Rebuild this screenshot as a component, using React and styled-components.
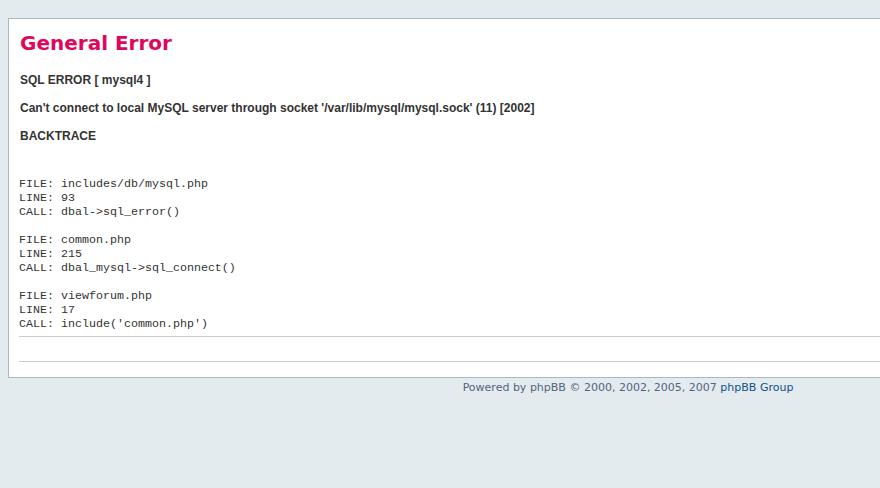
import React from "react";
import styled, { createGlobalStyle } from "styled-components";

const Global = createGlobalStyle`
  html, body { margin: 0; padding: 0; overflow: hidden; }
  body {
    background: #e4ebee;
    font-family: "DejaVu Sans", Verdana, sans-serif;
    font-size: 11px;
    color: #536482;
  }
`;

const Wrap = styled.div`
  width: 1240px;
  padding: 18px 0 0 8px;
`;

const Panel = styled.div`
  background: #ffffff;
  border: 1px solid #a9b8c2;
`;

const Content = styled.div`
  padding: 10px 10px 15px 10px;
`;

const Title = styled.h1`
  margin: 0;
  padding-left: 1px;
  font-family: "DejaVu Sans", Verdana, sans-serif;
  font-weight: bold;
  font-size: 20px;
  line-height: 28px;
  color: #df075c;
`;

const Message = styled.div`
  margin-top: ${(p) => p.$top}px;
  padding-bottom: 5px;
  border-bottom: 1px solid #cccccc;
  color: #333333;
  font-family: "Liberation Sans", Arial, sans-serif;
  font-weight: bold;
  font-size: 12px;
  line-height: 14px;
`;

const Para = styled.p`
  margin: 0 0 14px 0;
  padding-left: 1px;
  &:last-child { margin-bottom: 0; }
`;

const Trace = styled.div`
  margin-top: 34px;
  font-family: "Liberation Mono", "Courier New", monospace;
  font-weight: normal;
  font-size: 11.67px;
  line-height: 14px;
  color: #333333;
`;

const Frame = styled.div`
  margin-bottom: 14px;
  &:last-child { margin-bottom: 0; }
`;

const Footer = styled.div`
  margin-top: 4px;
  text-align: center;
  line-height: 12px;
  font-size: 11px;
  color: #536482;
`;

const Link = styled.a`
  color: #105289;
  text-decoration: none;
`;

const frames = [
  ["includes/db/mysql.php", "93", "dbal->sql_error()"],
  ["common.php", "215", "dbal_mysql->sql_connect()"],
  ["viewforum.php", "17", "include('common.php')"],
];

export default function App() {
  return (
    <>
      <Global />
      <Wrap>
        <Panel>
          <Content>
            <Title>General Error</Title>
            <Message $top={16}>
              <Para>SQL ERROR [ mysql4 ]</Para>
              <Para>
                Can't connect to local MySQL server through socket
                '/var/lib/mysql/mysql.sock' (11) [2002]
              </Para>
              <Para>BACKTRACE</Para>
              <Trace>
                {frames.map(([f, l, c]) => (
                  <Frame key={f}>
                    <div>FILE: {f}</div>
                    <div>LINE: {l}</div>
                    <div>CALL: {c}</div>
                  </Frame>
                ))}
              </Trace>
            </Message>
            <Message $top={19} />
          </Content>
        </Panel>
        <Footer>
          Powered by phpBB © 2000, 2002, 2005, 2007 <Link href="#">phpBB Group</Link>
        </Footer>
      </Wrap>
    </>
  );
}
